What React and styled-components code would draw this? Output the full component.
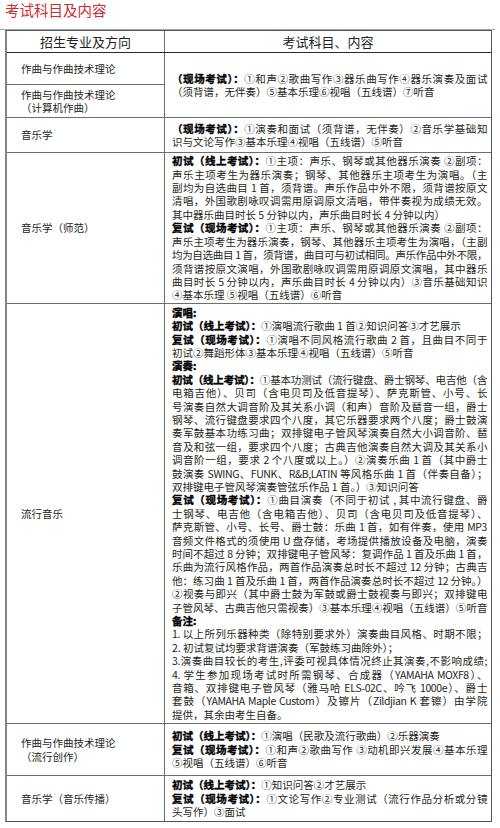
import React from 'react';
import styled, { createGlobalStyle, css } from 'styled-components';

const GlobalStyle = createGlobalStyle`
  * { box-sizing: border-box; }
  body {
    margin: 0;
    background: #fff;
    font-family: "Noto Sans CJK SC", "Noto Sans", sans-serif;
    color: #231f20;
  }
`;

const Page = styled.div`
  width: 500px;
`;

const Title = styled.h1`
  margin: 0;
  height: 29px;
  padding: 2px 0 0 5px;
  font-size: 14.5px;
  line-height: 16px;
  font-weight: 400;
  color: #cf2b30;
`;

const Rule = styled.div`
  width: 495px;
  height: 1px;
  background: #a3a3a3;
`;

const Table = styled.div`
  margin-left: 5px;
  width: 487px;
  border: 1px solid #555;
  border-left: 2px solid #858585;
`;

const Row = styled.div`
  display: grid;
  grid-template-columns: 158px 1fr;
  height: ${(p) => p.$h}px;
  ${(p) =>
    !p.$first &&
    css`
      border-top: 1px solid ${p.$dark ? '#2a2a2a' : '#6e6e6e'};
    `}
`;

const HeadCell = styled.div`
  display: flex;
  align-items: center;
  justify-content: center;
  font-size: 13px;
  ${(p) => p.$left && 'border-right: 1px solid #6e6e6e;'}
`;

const NameCell = styled.div`
  display: flex;
  flex-direction: column;
  justify-content: center;
  padding-left: 14px;
  font-size: 10.5px;
  line-height: 13.4px;
  border-right: 1px solid #6e6e6e;
  ${(p) => p.$h && `height: ${p.$h}px;`}
  ${(p) => p.$split && 'border-top: 1px solid #6e6e6e;'}
`;

const NameStack = styled.div`
  display: flex;
  flex-direction: column;
`;

const Content = styled.div`
  display: flex;
  flex-direction: column;
  justify-content: center;
  padding: 0 4px 0 7px;
  font-size: 10.5px;
  line-height: 13.4px;
`;

const Line = styled.div`
  white-space: nowrap;
  ${(p) =>
    p.$full &&
    css`
      text-align: justify;
      text-align-last: justify;
      letter-spacing: -0.4px;
    `}
`;

const Strong = styled.b`
  font-weight: 700;
  color: #000;
  -webkit-text-stroke: 0.35px #000;
`;

const F = (t) => ({ t, full: true });
const P = (t) => ({ t, full: false });

const rich = (t) =>
  t.split(/(\*\*[^*]+\*\*)/).map((s, i) =>
    s.startsWith('**') ? <Strong key={i}>{s.slice(2, -2)}</Strong> : s
  );

const compLines = [
  F('**（现场考试）：**①和声②歌曲写作③器乐曲写作④器乐演奏及面试'),
  P('（须背谱，无伴奏）⑤基本乐理⑥视唱（五线谱）⑦听音'),
];

const rows = [
  {
    h: 35,
    name: ['音乐学'],
    lines: [
      F('**（现场考试）：**①演奏和面试（须背谱，无伴奏）②音乐学基础知'),
      P('识与文论写作③基本乐理④视唱（五线谱）⑤听音'),
    ],
  },
  {
    h: 151,
    name: ['音乐学（师范）'],
    lines: [
      F('**初试（线上考试）：**①主项：声乐、钢琴或其他器乐演奏 ②副项：'),
      F('声乐主项考生为器乐演奏；钢琴、其他器乐主项考生为演唱。（主'),
      F('副均为自选曲目 1 首，须背谱。声乐作品中外不限，须背谱按原文'),
      F('清唱，外国歌剧咏叹调需用原调原文清唱，带伴奏视为成绩无效。'),
      P('其中器乐曲目时长 5 分钟以内，声乐曲目时长 4 分钟以内）'),
      F('**复试（现场考试）：**①主项：声乐、钢琴或其他器乐演奏 ②副项：'),
      F('声乐主项考生为器乐演奏，钢琴、其他器乐主项考生为演唱，（主副'),
      F('均为自选曲目 1 首，须背谱，曲目可与初试相同。声乐作品中外不限，'),
      F('须背谱按原文演唱，外国歌剧咏叹调需用原调原文演唱，其中器乐'),
      F('曲目时长 5 分钟以内，声乐曲目时长 4 分钟以内）③音乐基础知识'),
      P('④基本乐理 ⑤视唱（五线谱）⑥听音'),
    ],
  },
  {
    h: 420,
    name: ['流行音乐'],
    lines: [
      P('**演唱:**'),
      P('**初试（线上考试）：**①演唱流行歌曲 1 首②知识问答③才艺展示'),
      F('**复试（现场考试）：**①演唱不同风格流行歌曲 2 首，且曲目不同于'),
      P('初试②舞蹈形体③基本乐理④视唱（五线谱）⑤听音'),
      P('**演奏:**'),
      F('**初试（线上考试）：**①基本功测试（流行键盘、爵士钢琴、电吉他（含'),
      F('电箱吉他）、贝司（含电贝司及低音提琴）、萨克斯管、小号、长'),
      F('号演奏自然大调音阶及其关系小调（和声）音阶及琶音一组，爵士'),
      F('钢琴、流行键盘要求四个八度，其它乐器要求两个八度；爵士鼓演'),
      F('奏军鼓基本功练习曲；双排键电子管风琴演奏自然大小调音阶、琶'),
      F('音及和弦一组，要求四个八度；古典吉他演奏自然大调及其关系小'),
      F('调音阶一组，要求 2 个八度或以上。）②演奏乐曲 1 首（其中爵士'),
      F('鼓演奏 SWING、FUNK、R&B,LATIN 等风格乐曲 1 首（伴奏自备）；'),
      P('双排键电子管风琴演奏管弦乐作品 1 首。）③知识问答'),
      F('**复试（现场考试）：**①曲目演奏（不同于初试 , 其中流行键盘、爵'),
      F('士钢琴、电吉他（含电箱吉他）、贝司（含电贝司及低音提琴）、'),
      F('萨克斯管、小号、长号、爵士鼓：乐曲 1 首，如有伴奏，使用 MP3'),
      F('音频文件格式的须使用 U 盘存储，考场提供播放设备及电脑，演奏'),
      F('时间不超过 8 分钟；双排键电子管风琴：复调作品 1 首及乐曲 1 首，'),
      F('乐曲为流行风格作品，两首作品演奏总时长不超过 12 分钟；古典吉'),
      F('他：练习曲 1 首及乐曲 1 首，两首作品演奏总时长不超过 12 分钟。）'),
      F('②视奏与即兴（其中爵士鼓为军鼓或爵士鼓视奏与即兴；双排键电'),
      F('子管风琴、古典吉他只需视奏）③基本乐理④视唱（五线谱）⑤听音'),
      P('**备注:**'),
      F('1. 以上所列乐器种类（除特别要求外）演奏曲目风格、时期不限；'),
      P('2. 初试复试均要求背谱演奏（军鼓练习曲除外）；'),
      F('3.演奏曲目较长的考生,评委可视具体情况终止其演奏,不影响成绩;'),
      F('4. 学生参加现场考试时所需钢琴、合成器（YAMAHA MOXF8）、'),
      F('音箱、双排键电子管风琴（雅马哈 ELS-02C、吟飞 1000e）、爵士'),
      F('套鼓（YAMAHA Maple Custom）及镲片（Zildjian K 套镲）由学院'),
      P('提供，其余由考生自备。'),
    ],
  },
  {
    h: 52,
    name: ['作曲与作曲技术理论', '（流行创作）'],
    lines: [
      P('**初试（线上考试）：**①演唱（民歌及流行歌曲）②乐器演奏'),
      F('**复试（现场考试）：**①和声②歌曲写作 ③动机即兴发展④基本乐理'),
      P('⑤视唱（五线谱）⑥听音'),
    ],
  },
  {
    h: 46,
    name: ['音乐学（音乐传播）'],
    lines: [
      P('**初试（线上考试）：**①知识问答②才艺展示'),
      F('**复试（现场考试）：**①文论写作②专业测试（流行作品分析或分镜'),
      P('头写作）③面试'),
    ],
  },
];

const Lines = ({ lines }) => (
  <Content>
    {lines.map((l, i) => (
      <Line key={i} $full={l.full}>
        {rich(l.t)}
      </Line>
    ))}
  </Content>
);

export default function App() {
  return (
    <Page>
      <GlobalStyle />
      <Title>考试科目及内容</Title>
      <Rule />
      <Table>
        <Row $first $h={21}>
          <HeadCell $left>招生专业及方向</HeadCell>
          <HeadCell>考试科目、内容</HeadCell>
        </Row>
        <Row $dark $h={65}>
          <NameStack>
            <NameCell $h={31}>
              <div>作曲与作曲技术理论</div>
            </NameCell>
            <NameCell $h={33} $split>
              <div>作曲与作曲技术理论</div>
              <div>（计算机作曲）</div>
            </NameCell>
          </NameStack>
          <Lines lines={compLines} />
        </Row>
        {rows.map((r, i) => (
          <Row key={i} $h={r.h}>
            <NameCell>
              {r.name.map((n) => (
                <div key={n}>{n}</div>
              ))}
            </NameCell>
            <Lines lines={r.lines} />
          </Row>
        ))}
      </Table>
    </Page>
  );
}
